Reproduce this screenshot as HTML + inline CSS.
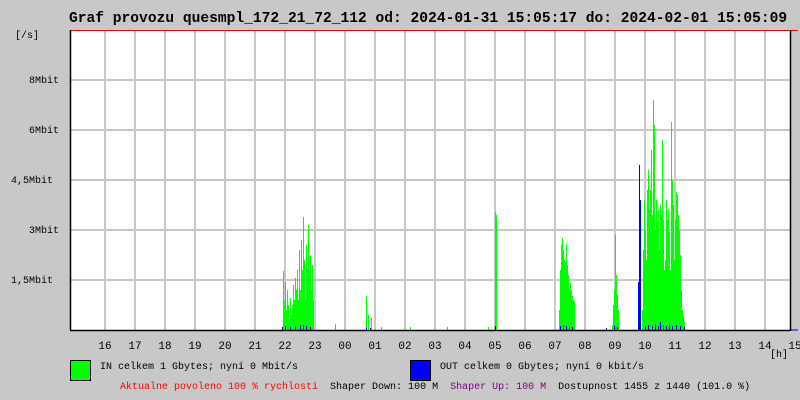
<!DOCTYPE html>
<html><head><meta charset="utf-8"><style>
html,body{margin:0;padding:0;background:#c8c8c8;}
body{width:800px;height:400px;position:relative;overflow:hidden;font-family:"Liberation Mono","DejaVu Sans Mono",monospace;font-size:10px;color:#000;}
.t{position:absolute;white-space:pre;line-height:12px;}
.h span{display:inline-block;width:30px;text-align:center;}
</style></head><body>
<svg width="800" height="400" style="position:absolute;left:0;top:0">
<rect x="70" y="30" width="720" height="300" fill="#fff"/>
<g stroke="#c8c8c8" stroke-width="2">
<path d="M105 31V330M135 31V330M165 31V330M195 31V330M225 31V330M255 31V330M285 31V330M315 31V330M345 31V330M375 31V330M405 31V330M435 31V330M465 31V330M495 31V330M525 31V330M555 31V330M585 31V330M615 31V330M645 31V330M675 31V330M705 31V330M735 31V330M765 31V330"/>
<path d="M70 80H790M70 130H790M70 180H790M70 230H790M70 280H790"/>
</g>
<g stroke="#00ff00" stroke-width="1">
<path d="M283.5 330V271M284.5 330V300M285.5 330V282M286.5 330V310M287.5 330V290M288.5 330V305M289.5 330V320M290.5 330V298M291.5 330V315M292.5 330V305M293.5 330V285M294.5 330V300M295.5 330V278M296.5 330V290M297.5 330V270M298.5 330V300M299.5 330V250M300.5 330V290M301.5 330V240M302.5 330V270M303.5 330V217M304.5 330V260M305.5 330V300M306.5 330V245M307.5 330V268M308.5 330V225M309.5 330V270M310.5 330V255M311.5 330V290M312.5 330V265M313.5 330V300"/>
<path d="M335.5 330V324M366.5 330V296M368.5 330V315M371.5 330V318M381.5 330V327M410.5 330V327M447.5 330V327M488.5 330V327M495.5 330V212M496.5 330V215"/>
<path d="M559.5 330V310M560.5 330V270M561.5 330V245M562.5 330V238M563.5 330V250M564.5 330V260M565.5 330V262M566.5 330V244M567.5 330V265M568.5 330V275M569.5 330V290M570.5 330V283M571.5 330V290M572.5 330V296M573.5 330V300M574.5 330V302"/>
<path d="M612.5 330V325M613.5 330V305M614.5 330V290M615.5 330V235M616.5 330V275M617.5 330V295M618.5 330V310"/>
<path d="M642.5 330V310M643.5 330V250M644.5 330V200M645.5 330V230M646.5 330V260M647.5 330V190M648.5 330V170M649.5 330V210M650.5 330V190M651.5 330V150M652.5 330V215M653.5 330V100M654.5 330V125M655.5 330V230M656.5 330V200M657.5 330V222M658.5 330V210M659.5 330V250M660.5 330V205M661.5 330V215M662.5 330V140M663.5 330V220M664.5 330V270M665.5 330V260M666.5 330V200M667.5 330V220M668.5 330V210M669.5 330V232M670.5 330V270M671.5 330V122M672.5 330V180M673.5 330V205M674.5 330V260M675.5 330V220M676.5 330V192M677.5 330V195M678.5 330V215M679.5 330V230M680.5 330V255M681.5 330V290M682.5 330V310M683.5 330V315M684.5 330V322"/>
</g>
<g stroke="#0000ff" stroke-width="1">
<path d="M282.5 330V327M285.5 330V326M290.5 330V327M295.5 330V326M300.5 330V325M303.5 330V325M306.5 330V326M310.5 330V327M366.5 330V327M370.5 330V328M495.5 330V326M560.5 330V326M563.5 330V325M566.5 330V326M569.5 330V326M572.5 330V327M606.5 330V328M614.5 330V326M617.5 330V327M638.5 330V282M639.5 330V165M640.5 330V200M645.5 330V326M648.5 330V325M652.5 330V326M655.5 330V324M658.5 330V326M660.5 330V322M663.5 330V325M666.5 330V326M669.5 330V324M672.5 330V326M676.5 330V325M680.5 330V326M684.5 330V327"/>
<path d="M790 330H798"/>
</g>
<path d="M70 30.5H798" stroke="#ff0000" stroke-width="1"/>
<path d="M70.5 30V330M70 330.5H790M790.5 30V331" stroke="#000" stroke-width="1.5"/>
<rect x="70.5" y="360.5" width="20" height="20" fill="#00ff00" stroke="#000"/>
<rect x="410.5" y="360.5" width="20" height="20" fill="#0000ff" stroke="#000"/>
</svg>
<div class="t" style="left:69px;top:13px;font-size:14.6px;font-weight:bold;">Graf provozu quesmpl_172_21_72_112 od: 2024-01-31 15:05:17 do: 2024-02-01 15:05:09</div>
<div class="t" style="left:15px;top:31px;">[/s]</div>
<div class="t" style="left:29px;top:76px;">8Mbit</div>
<div class="t" style="left:29px;top:126px;">6Mbit</div>
<div class="t" style="left:11px;top:176px;">4,5Mbit</div>
<div class="t" style="left:29px;top:226px;">3Mbit</div>
<div class="t" style="left:11px;top:276px;">1,5Mbit</div>
<div class="t h" style="left:90px;top:341px;width:740px;font-size:11px;"><span>16</span><span>17</span><span>18</span><span>19</span><span>20</span><span>21</span><span>22</span><span>23</span><span>00</span><span>01</span><span>02</span><span>03</span><span>04</span><span>05</span><span>06</span><span>07</span><span>08</span><span>09</span><span>10</span><span>11</span><span>12</span><span>13</span><span>14</span><span>15</span></div>
<div class="t" style="left:770px;top:350px;">[h]</div>
<div class="t" style="left:100px;top:362px;">IN celkem 1 Gbytes; nyní 0 Mbit/s</div>
<div class="t" style="left:440px;top:362px;">OUT celkem 0 Gbytes; nyní 0 kbit/s</div>
<div class="t" style="left:120px;top:382px;"><span style="color:#ff0000">Aktualne povoleno 100 % rychlosti</span>  Shaper Down: 100 M  <span style="color:#800080">Shaper Up: 100 M</span>  Dostupnost 1455 z 1440 (101.0 %)</div>
</body></html>
